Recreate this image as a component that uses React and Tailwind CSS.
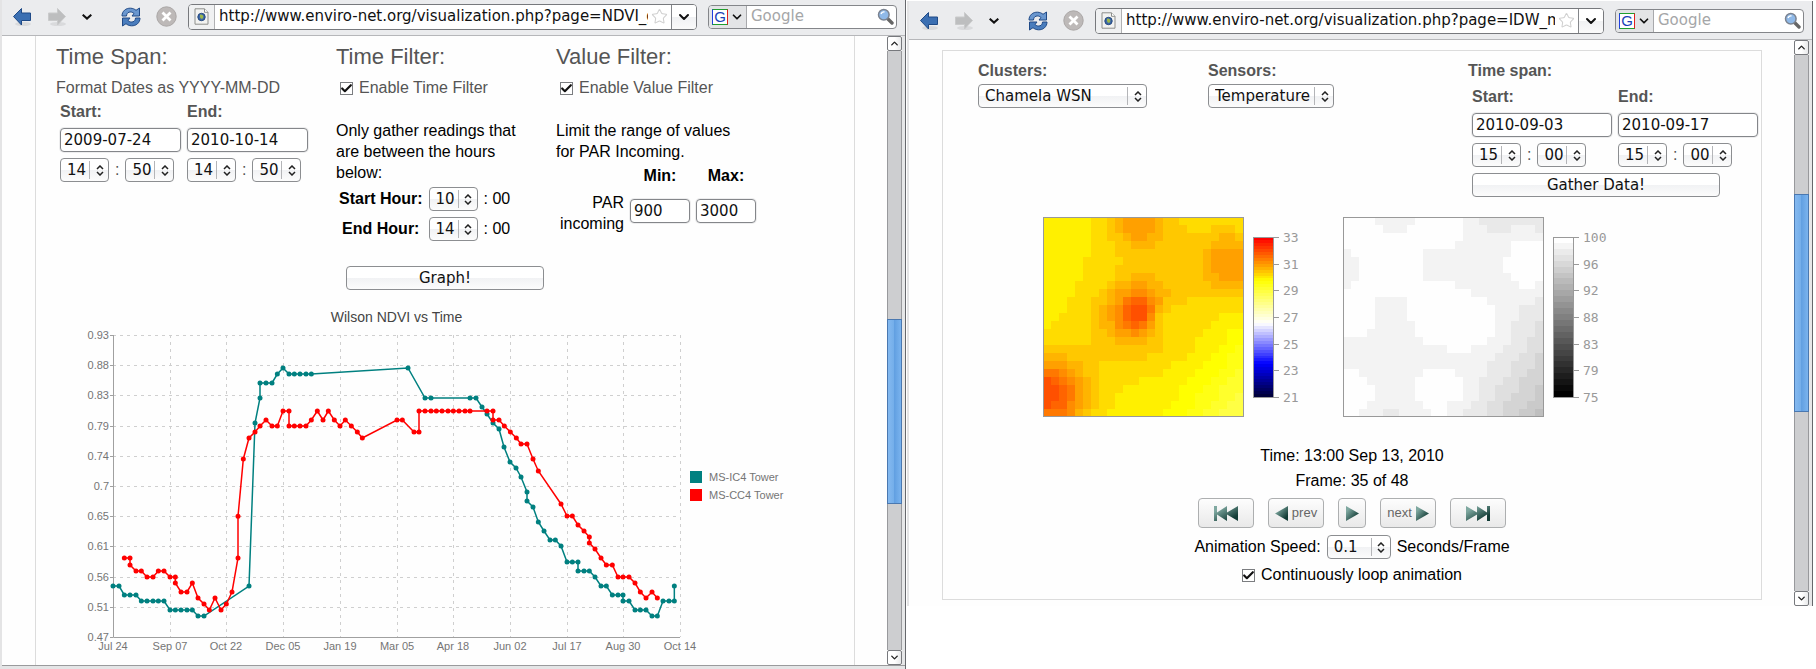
import { useId } from 'react'
import { ChevronDown, ChevronUp, Check, Star } from 'lucide-react'

const SANS = "font-['Liberation_Sans',Arial,sans-serif]"
const UI = "font-['DejaVu_Sans',Verdana,sans-serif]"

const FIELD = `h-6 rounded border border-[#84868a] bg-white px-[3px] text-[15px] text-[#111] shadow-[0_0_0_1px_#ededee] outline-none ${UI}`
const BUTTON = `h-6 rounded border border-[#8c8e91] bg-[linear-gradient(#ffffff_50%,#f1f2f4_50%,#fcfcfc)] text-[15px] text-[#111] ${UI}`

// Chart points, measured from the top left corner of the plot in thirds of a pixel
const IC4 =
  '0,753 18,753 34,780 51,780 69,780 85,798 102,798 120,798 136,798 153,798 171,825 187,825 204,825 222,825 238,825 255,843 273,843 408,753 426,264 441,189 441,144 459,144 477,144 493,117 510,99 528,117 544,117 561,117 579,117 595,117 885,99 936,189 954,189 1071,189 1089,189 1107,216 1122,237 1140,264 1158,282 1173,336 1191,381 1209,399 1224,426 1242,471 1242,498 1260,516 1276,561 1293,588 1311,615 1327,615 1344,633 1362,681 1378,681 1395,681 1395,708 1413,708 1429,708 1446,726 1464,753 1480,753 1498,780 1515,780 1530,780 1530,798 1548,798 1566,825 1582,825 1599,825 1617,843 1633,843 1650,798 1668,798 1684,798 1684,753'
const CC4 =
  '34,669 51,669 51,690 69,708 85,708 102,726 120,726 136,708 153,708 171,726 187,726 187,744 204,771 222,771 238,744 255,789 273,807 289,825 306,789 324,825 340,807 357,771 375,669 375,544 391,372 408,309 426,291 441,273 459,255 477,273 493,273 510,228 528,228 528,273 544,273 561,273 579,273 595,255 613,228 630,255 646,228 664,255 681,273 697,255 715,273 733,291 748,309 852,255 868,255 903,291 918,291 918,228 936,228 954,228 970,228 987,228 1005,228 1021,228 1038,228 1056,228 1071,228 1122,228 1140,228 1140,255 1158,255 1174,273 1192,291 1210,309 1224,327 1242,327 1260,372 1276,408 1344,507 1362,543 1378,543 1395,570 1413,588 1429,606 1429,624 1446,642 1464,669 1480,690 1498,690 1515,726 1530,726 1548,726 1566,744 1582,771 1599,789 1617,771 1633,789'

const toPoints = (text) => text.split(' ').map((pair) => pair.split(',').map((n) => Number(n) / 3))

const series = [
  { name: 'MS-IC4 Tower', color: '#008080', points: toPoints(IC4) },
  { name: 'MS-CC4 Tower', color: '#ff0000', points: toPoints(CC4) },
]

const xTicks = [
  ['Jul 24', 0],
  ['Sep 07', 57],
  ['Oct 22', 113],
  ['Dec 05', 170],
  ['Jan 19', 227],
  ['Mar 05', 284],
  ['Apr 18', 340],
  ['Jun 02', 397],
  ['Jul 17', 454],
  ['Aug 30', 510],
  ['Oct 14', 567],
]
const yTicks = [
  ['0.93', 0],
  ['0.88', 30],
  ['0.83', 60],
  ['0.79', 91],
  ['0.74', 121],
  ['0.7', 151],
  ['0.65', 181],
  ['0.61', 211],
  ['0.56', 242],
  ['0.51', 272],
  ['0.47', 302],
]

// Grid rows are run-length coded: a palette letter, then how many cells it fills
const heatRows = [
  'e6 f2 g h i4 h g2 f8',
  'e6 f2 g h i4 h g3 f3 g3 f',
  'e6 f2 g2 h i2 h2 g7 h2 g',
  'e6 f3 g2 h3 g7 h4',
  'e6 f3 g11 h i4',
  'e5 f5 g10 h i4',
  'e5 f4 g11 h i4',
  'e5 f4 g2 h3 g6 h2 i3',
  'e4 f4 g h2 i2 h2 g6 h4',
  'e4 f3 g h i2 j2 i h2 g9',
  'e3 f3 g2 h i k l2 j i g3 f7',
  'e3 f3 g h i j l m2 k h g f9',
  'e2 f4 g h i j l m2 j g f7 e3',
  'e f5 g h2 j k l k i g f6 e4',
  'f6 g2 h i2 j i h g f5 e3 d2',
  'f6 g3 h4 g2 f4 e4 d2',
  'g15 f4 e3 d2 c',
  'h3 g10 f5 e3 d2 c2',
  'i3 h2 g2 f9 e4 d3 c2',
  'k2 j i h g2 f8 e4 d3 c2 b',
  'm l k j i h g f5 e6 d3 c2 b2',
  'm2 l k i h g f3 e7 d3 c2 b3',
  'm2 l k i h g f2 e8 d2 c3 b2 a',
  'm l2 j i h g f2 e7 d3 c2 b2 a2',
  'k3 j h g f2 e7 d3 c2 b2 a3',
]
const grayRows = [
  'a4 b5 a6 b2 c8',
  'a5 b3 a7 b3 c3 b3 c',
  'a15 b10',
  'a14 b7 a4',
  'b a9 b11 a4',
  'b2 a8 b10 a5',
  'b2 a8 b10 a5',
  'b2 a8 b11 a4',
  'b a13 b8 a2 b',
  'a16 b9',
  'a4 b4 a10 b6 c',
  'a4 b4 a11 b3 c3',
  'a4 b4 a11 b3 c3',
  'a4 b5 a10 b2 c3 d',
  'a3 b6 a10 b2 c3 d',
  'b10 a8 b3 c2 d2',
  'b13 a3 b4 c3 d2',
  'b19 c3 d2 e',
  'b18 c3 d3 e',
  'a2 b8 a4 b4 c3 d2 e2',
  'a3 b6 a6 b2 c3 d2 e3',
  'a4 b5 a6 b2 c2 d3 e2 f',
  'a4 b5 a6 b2 c2 d2 e3 f',
  'a3 b7 a3 b3 c2 d2 e3 f2',
  'a2 b3 c2 b4 a2 b2 c3 d2 e2 f2 g',
]

const heatPalette = {
  a: '#ffff44', b: '#ffff2c', c: '#ffff14', d: '#ffff00', e: '#fff000', f: '#ffdc00', g: '#ffc800',
  h: '#ffb400', i: '#ffa000', j: '#ff8c00', k: '#ff7800', l: '#ff6400', m: '#ff5000',
}
const grayPalette = {
  a: '#fefefe', b: '#f3f3f3', c: '#e9e9e9', d: '#dfdfdf', e: '#d4d4d4', f: '#cacaca', g: '#bfbfbf',
}

const heatStops = [
  [0, [255, 0, 0]],
  [0.27, [255, 255, 0]],
  [0.54, [255, 255, 255]],
  [0.8, [0, 0, 255]],
  [1, [0, 0, 60]],
]
const grayStops = [
  [0, [255, 255, 255]],
  [1, [0, 0, 0]],
]

const colorAt = (stops, t) => {
  const i = Math.max(1, stops.findIndex(([pos]) => pos >= t))
  const [p0, c0] = stops[i - 1]
  const [p1, c1] = stops[i]
  const k = (t - p0) / (p1 - p0)
  return `rgb(${c0.map((c, n) => Math.round(c + (c1[n] - c) * k)).join(',')})`
}

const NavIcon = ({ d, fill, stroke }) => (
  <svg width="20" height="20" viewBox="0 0 20 20">
    <ellipse cx="11" cy="17" rx="8" ry="2" fill="#d9dadc" />
    <path d={d} fill={fill} stroke={stroke} strokeLinejoin="round" />
  </svg>
)

const Toolbar = ({ url, id, bar }) => (
  <header className={`flex items-center gap-[11px] border-b border-[#b6b7ba] bg-[#ebecee] pr-2 pl-2.5 ${bar}`}>
    <nav className="flex items-center gap-[15px]">
      <button type="button" aria-label="Back">
        <NavIcon d="M1.500 9.500L9.500 1.500V6H18.500V13.500H9.500V18Z" fill="#3b6fb2" stroke="#1f4a87" />
      </button>
      <button type="button" aria-label="Forward">
        <NavIcon d="M18.500 9.500L10.500 1.500V6H1.500V13.500H10.500V18Z" fill="#bdbebf" stroke="#c9cacb" />
      </button>
      <button type="button" aria-label="History">
        <svg width="10" height="6" viewBox="0 0 10 6" fill="none" stroke="#111" strokeWidth="2">
          <path d="M.7.7L5 4.600L9.300.7" />
        </svg>
      </button>
      <button type="button" aria-label="Reload" className="ml-3.5">
        <svg width="20" height="20" viewBox="0 0 20 20" strokeLinejoin="round">
          <path d="M1 9C1 4 5 1 9.500 1.200C12 1.300 13.600 2.100 15 3.300L18.500 1V9H11L13 6.500C11.500 5 9.500 4.700 8 5.200C6.300 5.800 5.600 7.200 5.500 9Z" fill="#6a97cf" stroke="#204a87" />
          <path d="M19 11C19 16 15 19 10.500 18.800C8 18.700 6.400 17.900 5 16.700L1.500 19V11H9L7 13.500C8.500 15 10.500 15.300 12 14.800C13.700 14.200 14.400 12.800 14.500 11Z" fill="#4a7dbd" stroke="#204a87" />
        </svg>
      </button>
      <button type="button" aria-label="Stop">
        <svg width="21" height="21" viewBox="0 0 21 21">
          <circle cx="10.500" cy="10.500" r="9.700" fill="#bdb9b8" stroke="#aaa6a5" />
          <path d="M6.500 6.500L14.500 14.500M14.500 6.500L6.500 14.500" stroke="#fff" strokeWidth="2.800" />
        </svg>
      </button>
    </nav>
    <div className="flex h-[26px] min-w-0 flex-1 items-center overflow-hidden rounded border border-[#77797d] bg-white">
      <span className="mr-1 flex h-full w-[26px] shrink-0 items-center justify-center border-r border-[#b0b1b3] bg-[#f0f1f2]">
        <svg width="15" height="17" viewBox="0 0 15 17">
          <path d="M1 .8H10.500L14 4.300V16.200H1Z" fill="#f3f3f1" stroke="#8d8f8c" />
          <path d="M10.500.8V4.300H14" fill="#fff" stroke="#8d8f8c" />
          <circle cx="7.500" cy="9" r="3.700" fill="#3d68a8" stroke="#24487d" />
          <path d="M6 6.500C9 6.500 10 8 9 10C8 11.500 6.500 11 6 9Z" fill="#9db84a" />
        </svg>
      </span>
      <input
        type="text"
        aria-label="Address"
        id={`${id}-url`}
        defaultValue={url}
        className={`min-w-0 flex-1 text-[15px] text-[#111] outline-none ${UI}`}
      />
      <Star className="mx-[3px] shrink-0" size={17} stroke="#d0d0d0" strokeWidth={1.5} />
      <button type="button" aria-label="Show history" className="flex h-full w-[25px] shrink-0 items-center justify-center border-l border-[#84868a] bg-[linear-gradient(#ffffff_50%,#f0f1f3_50%,#fafafa)]">
        <ChevronDown size={16} strokeWidth={3} color="#111" />
      </button>
    </div>
    <div className="flex h-[24px] w-[189px] shrink-0 items-center overflow-hidden rounded border border-[#84868a] bg-white">
      <button type="button" aria-label="Search engine" className="flex h-full w-[38px] shrink-0 items-center gap-0.5 border-r border-[#a8a9ac] bg-[#e3e4e6] pl-[3px]">
        <span className={`flex h-4 w-4 shrink-0 items-center justify-center border border-t-[#1f9e2f] border-r-[#e02020] border-b-[#1f9e2f] border-l-[#2040e0] bg-white text-[15px] leading-none text-[#1a3fb8] ${SANS}`}>
          G
        </span>
        <ChevronDown size={14} strokeWidth={3} color="#111" />
      </button>
      <input type="text" aria-label="Search" placeholder="Google" className={`min-w-0 flex-1 pl-1 text-[15px] outline-none placeholder:text-[#a5a6a8] ${UI}`} />
      <svg className="mr-0.5 shrink-0" width="17" height="17" viewBox="0 0 17 17">
        <path d="M10 10L15 15" stroke="#666" strokeWidth="3.400" strokeLinecap="round" />
        <circle cx="6.800" cy="6.800" r="5.300" fill="#8fb9e8" stroke="#7b8390" strokeWidth="1.500" />
        <path d="M4 6C4.500 4.500 6 3.700 7.500 4" fill="none" stroke="#fff" strokeWidth="1.400" />
      </svg>
    </div>
  </header>
)

const ARROW_BOX = 'flex h-[15px] w-[15px] shrink-0 items-center justify-center rounded-[2px] border border-[#77797d] bg-[linear-gradient(90deg,#ffffff_50%,#e8e9ea)]'

const Scrollbar = ({ before, thumb, after }) => (
  <div className="flex w-[15px] shrink-0 flex-col">
    <button type="button" aria-label="Scroll up" className={ARROW_BOX}>
      <ChevronUp size={11} strokeWidth={3} color="#222" />
    </button>
    <div className="flex flex-1 flex-col border-x border-[#98999c] bg-[#cdced0]">
      <div className={before} />
      <div className={`-mx-px border border-[#4a78b0] bg-[linear-gradient(90deg,#84b9f0,#74aeea_45%,#62a0e2_50%,#7ab3ee)] ${thumb}`} />
      <div className={after} />
    </div>
    <button type="button" aria-label="Scroll down" className={ARROW_BOX}>
      <ChevronDown size={11} strokeWidth={3} color="#222" />
    </button>
  </div>
)

const BrowserWindow = ({ id, url, bar, className, scroll, footer, children }) => (
  <section className={`flex min-w-0 flex-1 flex-col border-r border-l-2 border-r-[#66686c] border-l-[#e4e4e5] bg-[#fefefe] ${className}`}>
    <Toolbar id={id} url={url} bar={bar} />
    <div className="flex flex-1">
      <main className="min-w-0 flex-1">{children}</main>
      <Scrollbar {...scroll} />
      <div className="w-[3px] bg-[#e6e7e8]" />
    </div>
    {footer}
  </section>
)

const Select = ({ label, value, width = 'w-[49px]' }) => (
  <span className={`relative inline-flex shrink-0 ${width}`}>
    <select aria-label={label} defaultValue={value} className={`w-full appearance-none pr-5 pl-1.5 ${BUTTON}`}>
      <option>{value}</option>
    </select>
    <span className="pointer-events-none absolute top-[3px] right-0 flex h-[18px] w-5 items-center justify-center border-l border-[#b4b5b8]">
      <svg width="8" height="11" viewBox="0 0 8 11" fill="none" stroke="#222" strokeWidth="1.500">
        <path d="M1 4L4 1L7 4M1 7L4 10L7 7" />
      </svg>
    </span>
  </span>
)

const CheckBox = ({ label }) => (
  <label className="flex items-center gap-1.5">
    <span className="relative flex">
      <input type="checkbox" defaultChecked className="h-[13px] w-[13px] appearance-none border border-[#7b7d80] bg-white" />
      <Check className="pointer-events-none absolute top-0 left-0" size={13} strokeWidth={4} color="#111" />
    </span>
    {label}
  </label>
)

const TimePick = ({ label, hour, minute }) => (
  <div className="flex items-center gap-1.5">
    <Select label={`${label} hour`} value={hour} />
    <span>:</span>
    <Select label={`${label} minute`} value={minute} />
  </div>
)

const Chart = () => (
  <svg width="704" height="350" viewBox="-30 -29 704 350" className={SANS} fill="#757575" fontSize="11">
    <text x="283.500" y="-13" textAnchor="middle" fontSize="14" fill="#444">Wilson NDVI vs Time</text>
    <g stroke="#cfcfcf" strokeDasharray="3 4">
      {xTicks.slice(1).map(([label, x]) => (
        <line key={label} x1={x + 0.5} x2={x + 0.5} y1="0" y2="302" />
      ))}
      {yTicks.slice(0, -1).map(([label, y]) => (
        <line key={label} x1="0" x2="567" y1={y + 0.5} y2={y + 0.5} />
      ))}
    </g>
    <path d="M.5 0V302.500H567" fill="none" stroke="#a0a0a0" />
    {yTicks.map(([label, y]) => (
      <g key={label}>
        <path d={`M-3 ${y + 0.5}H0`} stroke="#a0a0a0" />
        <text x="-4" y={y + 4} textAnchor="end">{label}</text>
      </g>
    ))}
    {xTicks.map(([label, x]) => (
      <text key={label} x={x} y="315" textAnchor="middle">{label}</text>
    ))}
    {series.map((s, i) => (
      <g key={s.name}>
        <polyline points={s.points.join(' ')} fill="none" stroke={s.color} strokeWidth="1.500" />
        {s.points.map(([x, y], n) => (
          <circle key={n} cx={x} cy={y} r="2.500" fill={s.color} />
        ))}
        <rect x="577" y={136 + i * 18} width="12" height="12" fill={s.color} />
        <text x="596" y={146 + i * 18}>{s.name}</text>
      </g>
    ))}
  </svg>
)

const GridMap = ({ rows, palette, stops, steps, ticks }) => (
  <svg width="270" height="202" viewBox="0 0 270 202" shapeRendering="crispEdges">
    {rows.map((row, y) => {
      let x = 0
      return row.split(' ').map((run) => {
        const count = Number(run.slice(1)) || 1
        const start = x
        x += count
        return <rect key={`${y}-${start}`} x={start * 8} y={y * 8} width={count * 8} height="8" fill={palette[run[0]]} />
      })
    })}
    <rect x=".5" y=".5" width="200" height="199" fill="none" stroke="#999" />
    {Array.from({ length: steps }, (_, i) => (
      <rect key={i} x="211" y={20 + (i * 160) / steps} width="19" height={160 / steps + 1} fill={colorAt(stops, i / (steps - 1))} />
    ))}
    <rect x="210.500" y="20.500" width="20" height="160" fill="none" stroke="#999" />
    {ticks.map((tick, i) => {
      const y = 20 + Math.round((i * 160) / 6)
      return (
        <g key={tick}>
          <path d={`M231 ${y + 0.5}H236`} stroke="#999" />
          <text x="240" y={y + 5} className="font-['DejaVu_Sans_Mono',monospace] text-[13px]" fill="#999">{tick}</text>
        </g>
      )
    })}
  </svg>
)

const MediaButton = ({ label, d, box = 'w-[56px]', width, before, after }) => {
  const id = useId()
  return (
    <button
      type="button"
      aria-label={label}
      className={`flex h-[30px] items-center justify-center gap-1 rounded border border-[#adafb0] bg-[linear-gradient(#fdfdfd,#e9e9e9)] text-[13px] text-[#666] ${box}`}
    >
      {before}
      <svg width={width} height="15" viewBox={`0 0 ${width} 15`}>
        <linearGradient id={id} x1="0" y1="0" x2="1" y2="1">
          <stop offset="0.2" stopColor="#7fa8a0" />
          <stop offset="0.8" stopColor="#123c36" />
        </linearGradient>
        <path d={d} fill={`url(#${id})`} />
      </svg>
      {after}
    </button>
  )
}

const DateColumn = ({ id, label, date, width, hour, minute }) => (
  <div className="flex flex-col">
    <label htmlFor={id} className="font-bold leading-5">{label}:</label>
    <input id={id} type="text" defaultValue={date} className={`my-1.5 ${FIELD} ${width}`} />
    <TimePick label={label} hour={hour} minute={minute} />
  </div>
)

const NdviPage = () => (
  <div className={`mr-8 ml-[33px] h-full border-x border-[#dcdcdc] pl-5 text-base text-[#555] ${SANS}`}>
    <div className="grid grid-cols-[280px_220px_1fr] pt-1">
      <div>
        <h2 className="text-[22px] leading-[34px]">Time Span:</h2>
        <p className="pt-1 leading-5">Format Dates as YYYY-MM-DD</p>
        <div className="flex gap-1.5 pt-1 pl-1">
          <DateColumn id="ndvi-start" label="Start" date="2009-07-24" width="w-[121px]" hour="14" minute="50" />
          <DateColumn id="ndvi-end" label="End" date="2010-10-14" width="w-[121px]" hour="14" minute="50" />
        </div>
      </div>

      <div>
        <h2 className="text-[22px] leading-[34px]">Time Filter:</h2>
        <div className="pt-1 pl-1 leading-5">
          <CheckBox label="Enable Time Filter" />
        </div>
        <p className="pt-[22px] leading-[21px] text-black">
          Only gather readings that
          <br />
          are between the hours
          <br />
          below:
        </p>
        <div className="grid w-[176px] grid-cols-[auto_auto_auto] items-center justify-start gap-x-1.5 gap-y-1.5 pt-1 pl-[3px] text-black">
          <b>Start Hour:</b>
          <Select label="Start hour" value="10" />
          <span>: 00</span>
          <b className="text-center">End Hour:</b>
          <Select label="End hour" value="14" />
          <span>: 00</span>
        </div>
      </div>

      <div>
        <h2 className="text-[22px] leading-[34px]">Value Filter:</h2>
        <div className="pt-1 pl-1 leading-5">
          <CheckBox label="Enable Value Filter" />
        </div>
        <p className="pt-[22px] leading-[21px] text-black">
          Limit the range of values
          <br />
          for PAR Incoming.
        </p>
        <div className="grid grid-cols-[68px_60px_60px] items-center justify-start gap-x-1.5 pt-0.5 text-right text-black">
          <span />
          <label htmlFor="par-min" className="text-center font-bold">Min:</label>
          <label htmlFor="par-max" className="text-center font-bold">Max:</label>
          <span className="pt-1 leading-[21px]">
            PAR
            <br />
            incoming
          </span>
          <input id="par-min" type="text" defaultValue="900" className={`w-full ${FIELD}`} />
          <input id="par-max" type="text" defaultValue="3000" className={`w-full ${FIELD}`} />
        </div>
      </div>
    </div>
    <button type="button" className={`mt-[25px] ml-[290px] block w-[198px] ${BUTTON}`}>Graph!</button>
    <div className="mt-4 ml-[27px]">
      <Chart />
    </div>
  </div>
)

const IdwPage = () => (
  <div className={`mt-2.5 mr-8 mb-1.5 ml-[33px] border border-[#dcdcdc] pt-2.5 pb-3.5 text-base text-[#555] ${SANS}`}>
    <div className="grid grid-cols-[230px_260px_1fr] pl-[35px]">
      <div className="flex flex-col gap-[3px]">
        <b className="leading-5">Clusters:</b>
        <Select label="Clusters" value="Chamela WSN" width="w-[169px]" />
      </div>
      <div className="flex flex-col gap-[3px]">
        <b className="leading-5">Sensors:</b>
        <Select label="Sensors" value="Temperature" width="w-[126px]" />
      </div>
      <div>
        <b className="block leading-5">Time span:</b>
        <div className="flex gap-1.5 pt-1.5 pl-1">
          <DateColumn id="idw-start" label="Start" date="2010-09-03" width="w-[140px]" hour="15" minute="00" />
          <DateColumn id="idw-end" label="End" date="2010-09-17" width="w-[140px]" hour="15" minute="00" />
        </div>
        <button type="button" className={`mt-1.5 ml-1 block w-[248px] ${BUTTON}`}>Gather Data!</button>
      </div>
    </div>

    <div className="flex gap-[30px] pt-5 pl-[100px]">
      <GridMap rows={heatRows} palette={heatPalette} stops={heatStops} steps={54} ticks={['33', '31', '29', '27', '25', '23', '21']} />
      <GridMap rows={grayRows} palette={grayPalette} stops={grayStops} steps={27} ticks={['100', '96', '92', '88', '83', '79', '75']} />
    </div>

    <div className="flex flex-col items-center pt-6 text-black">
      <p className="leading-[25px]">Time: 13:00 Sep 13, 2010</p>
      <p className="leading-[25px]">Frame: 35 of 48</p>
      <div className="flex gap-[14px] pt-[5px]">
        <MediaButton label="First frame" width={24} d="M0 0H3V6.500L13 0V6.500L24 0V15L13 8.500V15L3 8.500V15H0Z" />
        <MediaButton label="prev" width={13} d="M13 0V15L0 7.500Z" after="prev" />
        <MediaButton label="Play" width={13} d="M0 0V15L13 7.500Z" box="w-[28px]" />
        <MediaButton label="next" width={13} d="M0 0V15L13 7.500Z" before="next" />
        <MediaButton label="Last frame" width={24} d="M24 0H21V6.500L11 0V6.500L0 0V15L11 8.500V15L21 8.500V15H24Z" />
      </div>
      <div className="flex items-center gap-1.5 pt-[7px]">
        <span>Animation Speed:</span>
        <Select label="Animation speed" value="0.1" width="w-[64px]" />
        <span>Seconds/Frame</span>
      </div>
      <div className="pt-1.5 leading-5">
        <CheckBox label="Continuously loop animation" />
      </div>
    </div>
  </div>
)

const App = () => (
  <div className="flex min-h-screen items-start gap-px bg-white pr-[3px]">
    <BrowserWindow
      id="ndvi"
      url="http://www.enviro-net.org/visualization.php?page=NDVI_graph"
      bar="h-9 pb-0.5"
      className="min-h-screen"
      scroll={{ before: 'grow-[269]', thumb: 'grow-[183]', after: 'grow-[147]' }}
      footer={<footer className="h-1 border-t border-[#9a9a9c] bg-[#e4e5e6]" />}
    >
      <NdviPage />
    </BrowserWindow>
    <BrowserWindow
      id="idw"
      url="http://www.enviro-net.org/visualization.php?page=IDW_map"
      bar="h-[39px] pt-px"
      className="mt-px"
      scroll={{ before: 'grow-[139]', thumb: 'grow-[217]', after: 'grow-[179]' }}
    >
      <IdwPage />
    </BrowserWindow>
  </div>
)

export default App
